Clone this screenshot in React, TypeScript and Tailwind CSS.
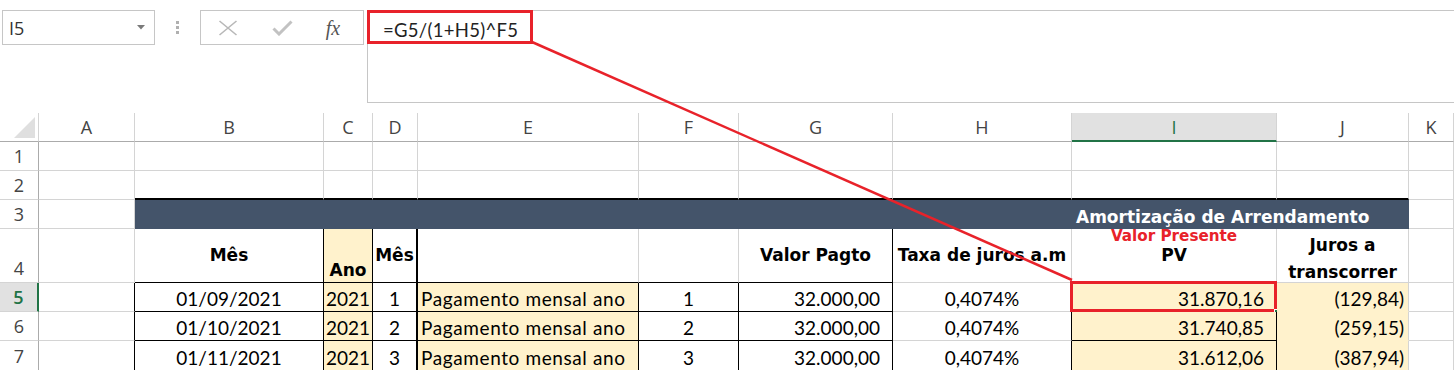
import type { ReactNode } from 'react'
import { twMerge } from 'tailwind-merge'

const LETTERS = ['A', 'B', 'C', 'D', 'E', 'F', 'G', 'H', 'I', 'J', 'K']

const rows = [
  { n: 5, data: '01/09/2021', mes: '1', pv: '31.870,16', juros: '(129,84)' },
  { n: 6, data: '01/10/2021', mes: '2', pv: '31.740,85', juros: '(259,15)' },
  { n: 7, data: '01/11/2021', mes: '3', pv: '31.612,06', juros: '(387,94)' },
]

const Cell = ({ className, children }: { className?: string; children?: ReactNode }) => (
  <div
    className={twMerge(
      'relative flex min-w-0 whitespace-nowrap border-r border-b border-r-[#d4d4d4] border-b-[#d4d4d4]',
      className
    )}
  >
    {children}
  </div>
)

const RowHead = ({ n, active }: { n: number; active?: boolean }) => (
  <Cell
    className={twMerge(
      "items-end justify-center border-r-[#ababab] pb-[5px] font-['Open_Sans',sans-serif] text-[18px] leading-none text-[#444]",
      active && 'border-r-2 border-r-[#217346] bg-[#e1e1e1] font-semibold text-[#217346]'
    )}
  >
    {n}
  </Cell>
)

// empty cells with plain gridlines
const blank = (count: number, key: string) =>
  Array.from({ length: count }, (_, i) => <Cell key={`${key}-${i}`} />)

const YELLOW = 'bg-[#fff2cc]'
const BOLD = "font-['DejaVu_Sans',sans-serif] font-bold text-[17px] leading-none"

export default function App() {
  return (
    <div className="relative h-[370px] w-[1454px] overflow-hidden bg-white font-['Lato',sans-serif] text-black">
      {/* name box + formula bar */}
      <div className="flex h-[113px] items-start pt-[10px]">
        <div className="ml-[2px] flex h-[35px] w-[153px] items-center justify-between border border-[#c6c6c6] pl-[6px] pr-[9px]">
          <span className="font-['Open_Sans',sans-serif] text-[18px] leading-none text-[#333]">I5</span>
          <svg width="8" height="5" viewBox="0 0 8 5">
            <path d="M0 0h8L4 4.5z" fill="#7a7a7a" />
          </svg>
        </div>
        <div className="flex h-[35px] w-[45px] flex-col items-center justify-center gap-[2px]">
          <span className="h-[3px] w-[3px] bg-[#b0b0b0]" />
          <span className="h-[3px] w-[3px] bg-[#b0b0b0]" />
          <span className="h-[3px] w-[3px] bg-[#b0b0b0]" />
        </div>
        <div className="grid h-[35px] w-[164px] grid-cols-3 items-center border border-[#c6c6c6]">
          <div className="flex justify-center">
            <svg width="20" height="16" viewBox="0 0 20 16">
              <path d="M1.5 1l17 14M18.5 1l-17 14" stroke="#b8b8b8" strokeWidth="1.6" />
            </svg>
          </div>
          <div className="flex justify-center">
            <svg width="21" height="16" viewBox="0 0 21 16">
              <path d="M1.5 8.5l5.5 5.5L19.5 1.5" stroke="#c2c2c2" strokeWidth="3" fill="none" />
            </svg>
          </div>
          <div className="flex justify-center pr-[6px]">
            <span className="font-['Liberation_Serif',serif] text-[20px] italic leading-none text-[#555]">fx</span>
          </div>
        </div>
        <div className="relative ml-[3px] -mr-[2px] h-[93px] flex-1 border border-[#c6c6c6] pl-[15px] pt-[8px]">
          <span className="text-[18.5px] leading-none tracking-[0.3px] text-[#222]">=G5/(1+H5)^F5</span>
          <div className="absolute -left-px -top-px h-[34px] w-[166px] border-[3px] border-[#e8222a]" />
        </div>
      </div>

      {/* sheet */}
      <div className="grid grid-cols-[39px_96px_189px_49px_45px_221px_100px_154px_179px_205px_132px_1fr] grid-rows-[29px_29px_29px_29px_54px_29px_29px_30px] text-[19px] leading-none">
        {/* column headers */}
        <Cell className="items-end justify-end border-b-[#ababab] pb-[3px] pr-[3px]">
          <svg width="21" height="21" viewBox="0 0 21 21">
            <path d="M21 0v21H0z" fill="#dfdfdf" />
          </svg>
        </Cell>
        {LETTERS.map((l) => (
          <Cell
            key={l}
            className={twMerge(
              "items-center justify-center border-b-[#ababab] font-['Open_Sans',sans-serif] text-[18px] text-[#444]",
              l === 'I' && 'border-b-2 border-b-[#217346] bg-[#e1e1e1] text-[#217346]'
            )}
          >
            {l}
          </Cell>
        ))}

        {/* row 1 */}
        <RowHead n={1} />
        {blank(11, 'r1')}

        {/* row 2 */}
        <RowHead n={2} />
        <Cell />
        {Array.from({ length: 9 }, (_, i) => (
          <Cell key={`r2-${i}`} className="border-b-2 border-b-black" />
        ))}
        <Cell />

        {/* row 3: title band */}
        <RowHead n={3} />
        <Cell />
        {Array.from({ length: 7 }, (_, i) => (
          <Cell key={`r3-${i}`} className="border-r-[#44546a] border-b-[#44546a] bg-[#44546a]" />
        ))}
        <Cell className={twMerge('col-span-2 items-end border-r-[#44546a] border-b-[#44546a] bg-[#44546a] pb-[2px] pl-[4px] text-white', BOLD)}>
          Amortização de Arrendamento
        </Cell>
        <Cell />

        {/* row 4: headings */}
        <RowHead n={4} />
        <Cell />
        <Cell className={twMerge('items-center justify-center border-r-black border-b-black', BOLD)}>Mês</Cell>
        <Cell className={twMerge('items-end justify-center border-r-black border-b-black pb-[3px]', YELLOW, BOLD)}>Ano</Cell>
        <Cell className={twMerge('items-center justify-center border-r-2 border-r-black border-b-black', BOLD)}>Mês</Cell>
        <Cell className="border-b-black" />
        <Cell className="border-b-black" />
        <Cell className={twMerge('items-center justify-center border-r-black border-b-black', BOLD)}>Valor Pagto</Cell>
        <Cell className={twMerge('items-center justify-center', BOLD)}>Taxa de juros a.m</Cell>
        <Cell className={twMerge('flex-col items-center', BOLD)}>
          <span className="text-[15.2px] leading-none text-[#e8222a]">Valor Presente</span>
          <span className="mt-[3px] leading-none">PV</span>
        </Cell>
        <Cell className={twMerge('flex-col items-center justify-end gap-[10px] pb-[1px]', BOLD)}>
          <span>Juros a</span>
          <span>transcorrer</span>
        </Cell>
        <Cell />

        {/* rows 5-7 */}
        {rows.map((r, i) => (
          <div key={r.n} className="contents">
            <RowHead n={r.n} active={i === 0} />
            <Cell className="border-r-black" />
            <Cell className="items-end justify-center border-r-black border-b-black pb-[3px]">{r.data}</Cell>
            <Cell className={twMerge('items-end justify-center border-r-black border-b-black pb-[3px]', YELLOW)}>2021</Cell>
            <Cell className="items-end justify-center border-r-2 border-r-black border-b-black pb-[3px]">{r.mes}</Cell>
            <Cell className={twMerge('items-end border-r-black border-b-black pb-[3px] pl-[3px] tracking-[0.6px]', YELLOW)}>
              Pagamento mensal ano
            </Cell>
            <Cell className="items-end justify-center border-r-black border-b-black pb-[3px]">{r.mes}</Cell>
            <Cell className="items-end justify-end border-r-black border-b-black pb-[3px] pr-[12px]">32.000,00</Cell>
            <Cell className="items-end justify-center border-r-black pb-[3px]">0,4074%</Cell>
            <Cell className={twMerge('items-end justify-end border-r-black border-b-black pb-[3px] pr-[12px]', YELLOW)}>
              {r.pv}
              {i === 0 && (
                <>
                  <div className="absolute -top-[2px] -left-[2px] -right-[1px] -bottom-[1px] border-[3px] border-[#e8222a]" />
                  <div className="absolute -right-[3px] -bottom-[3px] h-[5px] w-[5px] border border-white bg-[#217346]" />
                </>
              )}
            </Cell>
            <Cell className={twMerge('items-end justify-end border-b-[#fff2cc] pb-[3px] pr-[4px]', YELLOW)}>{r.juros}</Cell>
            <Cell />
          </div>
        ))}
      </div>

      {/* arrow from the formula to the selected cell */}
      <svg className="pointer-events-none absolute inset-0" width="1454" height="370">
        <line x1="532" y1="42" x2="1072" y2="280" stroke="#e8222a" strokeWidth="2.5" />
      </svg>
    </div>
  )
}
